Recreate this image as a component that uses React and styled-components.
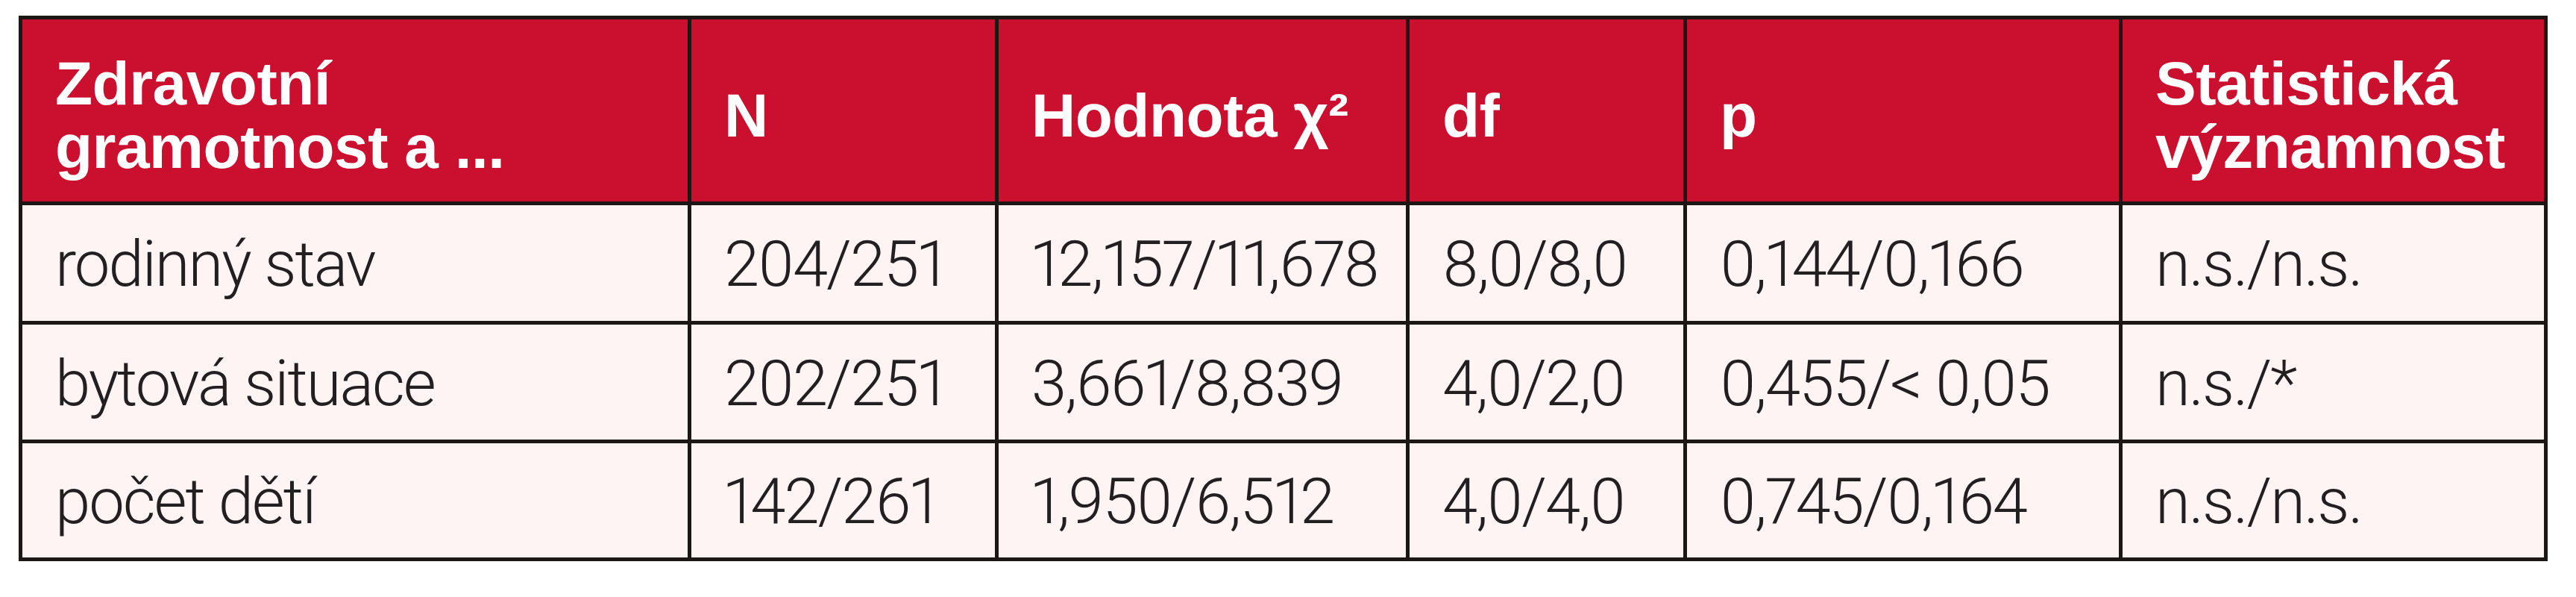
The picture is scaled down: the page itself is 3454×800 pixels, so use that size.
import React from "react"
import styled, { createGlobalStyle } from "styled-components"

const GlobalStyle = createGlobalStyle`
  html, body {
    margin: 0;
    padding: 0;
    background: #ffffff;
  }
`

const columns = [892, 407, 546, 367, 579, 565]

const headers = [
  ["Zdravotní", "gramotnost a ..."],
  ["N"],
  ["Hodnota χ²"],
  ["df"],
  ["p"],
  ["Statistická", "významnost"],
]

const rows = [
  ["rodinný stav", "204/251", "12,157/11,678", "8,0/8,0", "0,144/0,166", "n.s./n.s."],
  ["bytová situace", "202/251", "3,661/8,839", "4,0/2,0", "0,455/< 0,05", "n.s./*"],
  ["počet dětí", "142/261", "1,950/6,512", "4,0/4,0", "0,745/0,164", "n.s./n.s."],
]

const App = () => {
  return (
    <>
      <GlobalStyle />
      <Table $cols={columns}>
        {headers.map((lines, i) => (
          <HeadCell key={"h" + i}>
            <span>
              {lines.map((line, j) => (
                <React.Fragment key={j}>
                  {j > 0 && <br />}
                  {line}
                </React.Fragment>
              ))}
            </span>
          </HeadCell>
        ))}
        {rows.map((row, r) =>
          row.map((value, c) => <BodyCell key={r + "-" + c}>{value}</BodyCell>)
        )}
      </Table>
    </>
  )
}
export default App

const Table = styled.div`
  display: grid;
  grid-template-columns: ${(p) => p.$cols.map((w) => w + "px").join(" ")};
  grid-template-rows: 244px 155px 154px 153px;
  gap: 5px;
  padding: 5px;
  width: max-content;
  margin: 21px 0 0 25px;
  background: #1c1715;
`

const Cell = styled.div`
  display: flex;
  align-items: center;
  padding-left: 44px;
  white-space: nowrap;
  overflow: hidden;
`

const HeadCell = styled(Cell)`
  background: #cb0f2f;
  color: #ffffff;
  padding-top: 12px;
  font-family: "Liberation Sans", Arial, sans-serif;
  font-weight: 700;
  font-size: 82px;
  line-height: 85px;
  letter-spacing: -0.5px;
`

const BodyCell = styled(Cell)`
  background: #fdf4f3;
  color: #231f20;
  padding-top: 4px;
  font-family: Roboto, "Liberation Sans", sans-serif;
  font-weight: 300;
  font-size: 85px;
  line-height: 1;
  letter-spacing: -2px;
  font-variant-numeric: proportional-nums;
`
